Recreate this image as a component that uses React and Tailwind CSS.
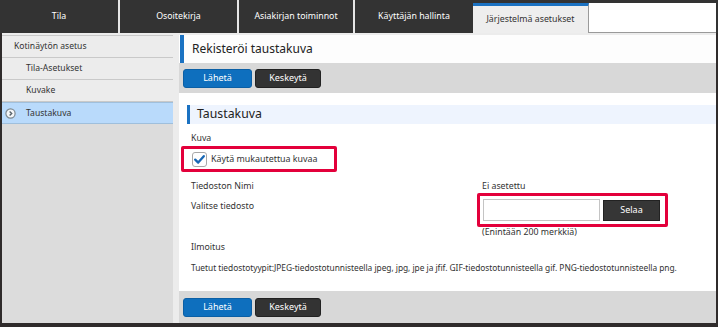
import React from 'react';

const Tab = ({ label, w }) => (
  <div className={`${w} h-full flex items-center justify-center text-white text-[8.8px]`}>{label}</div>
);

const Sep = () => <div className="w-[2px] h-full bg-[#e6e6e6]" />;

const SideItem = ({ label, indent, active }) => (
  <div
    className={`relative h-[22px] flex items-center border-b ${
      active ? 'bg-[#b9dafb] border-[#9fbfdc] border-t' : 'bg-[#ececec] border-[#c9c9c9]'
    } ${indent ? 'pl-[24px]' : 'pl-[12px]'}`}
  >
    {active && (
      <svg className="absolute left-[3px] top-[5px]" width="11" height="11" viewBox="0 0 11 11">
        <circle cx="5.5" cy="5.5" r="4.6" fill="#f4f6f8" stroke="#7d8890" strokeWidth="1.2" />
        <path d="M4.6 3.4 L6.7 5.5 L4.6 7.6" fill="none" stroke="#59636b" strokeWidth="1.4" />
      </svg>
    )}
    <span className="text-[8.6px] text-[#333]">{label}</span>
  </div>
);

const ActionBar = ({ h }) => (
  <div className={`${h} bg-[#d8d8d8] flex items-center pl-[4px] gap-[3px]`}>
    <button className="w-[69px] h-[19px] rounded-[3px] bg-[#0e6fbe] text-white text-[9px] border border-[#0b5fa5]">Lähetä</button>
    <button className="w-[66px] h-[19px] rounded-[3px] bg-[#333333] text-white text-[9px] border border-[#222]">Keskeytä</button>
  </div>
);

export default function App() {
  return (
    <div className="w-[718px] h-[327px] flex flex-col bg-[#2f2b2b] font-['Noto_Sans','Open_Sans',sans-serif] text-[#333] overflow-hidden">
      {/* tabs */}
      <div className="h-[33px] flex bg-[#333333] shrink-0">
        <Tab label="Tila" w="w-[118px]" />
        <Sep />
        <Tab label="Osoitekirja" w="w-[117px]" />
        <Sep />
        <Tab label="Asiakirjan toiminnot" w="w-[114px]" />
        <Sep />
        <Tab label="Käyttäjän hallinta" w="w-[118px]" />
        <div className="w-[116px] mt-[3px] bg-[#eeeeee] border-t-[3px] border-[#1b72c2] flex items-center justify-center text-[8.8px] text-[#333] border-r border-r-[#9a9a9a]">
          Järjestelmä asetukset
        </div>
        <div className="flex-1 mt-[3px] mr-[2px] bg-white border-b border-[#9a9a9a]" />
      </div>

      {/* body */}
      <div className="flex-1 flex bg-[#ececec] border-l-2 border-r-2 border-b-4 border-[#2f2b2b] pt-[2px] min-h-0">
        <div className="w-[171px] shrink-0 bg-[#dcdcdc] border-t border-[#c9c9c9]">
          <SideItem label="Kotinäytön asetus" />
          <SideItem label="Tila-Asetukset" indent />
          <SideItem label="Kuvake" indent />
          <SideItem label="Taustakuva" indent active />
        </div>

        <div className="flex-1 ml-[6px] bg-white flex flex-col min-w-0 overflow-hidden">
          <div className="h-[28px] ml-[1px] border-l-[4px] border-[#1b72c2] bg-[#fdfdfd] flex items-center pl-[8px] text-[12px] text-[#222]">
            Rekisteröi taustakuva
          </div>
          <ActionBar h="h-[30px]" />

          <div className="mt-[12px] ml-[8px] h-[19px] border-l-[3px] border-[#1b72c2] bg-[#eef4fe] flex items-center pl-[7px] text-[12.3px] text-[#222]">
            Taustakuva
          </div>

          <div className="pl-[12px] text-[8.8px] leading-[12px]">
            <div className="mt-[8px] h-[12px]">Kuva</div>
          </div>

          <div className="mt-[2px] ml-[2px] w-[156px] h-[26px] border-[3px] border-[#e3003b] rounded-[2px] flex items-center pl-[8px]">
            <svg width="15" height="15" viewBox="0 0 15 15">
              <rect x="0.5" y="0.5" width="14" height="14" rx="2.5" fill="#fff" stroke="#a8a8a8" />
              <path d="M3.2 7.6 L6.2 10.6 L11.8 4.2" fill="none" stroke="#1767b5" strokeWidth="2.3" strokeLinecap="round" strokeLinejoin="round" />
            </svg>
            <span className="ml-[4px] text-[8.9px]">Käytä mukautettua kuvaa</span>
          </div>

          <div className="pl-[12px] text-[8.8px] leading-[12px]">
            <div className="mt-[8px] flex h-[12px]">
              <div className="w-[291px]">Tiedoston Nimi</div>
              <div>Ei asetettu</div>
            </div>
          </div>

          <div className="mt-[1px] flex text-[8.8px] leading-[12px]">
            <div className="w-[298px] pl-[12px] pt-[7px]">Valitse tiedosto</div>
            <div className="w-[191px] h-[34px] border-[3px] border-[#e3003b] rounded-[2px] flex items-center pl-[3px] pr-[5px] gap-[3px]">
              <div className="w-[117px] h-[22px] bg-white border border-[#c4c4c4]" />
              <button className="w-[57px] h-[21px] bg-[#363636] border border-[#222] text-white text-[9px]">Selaa</button>
            </div>
          </div>

          <div className="pl-[303px] text-[8.8px] leading-[11px] h-[11px]">(Enintään 200 merkkiä)</div>

          <div className="pl-[12px] text-[8.8px] leading-[12px]">
            <div className="mt-[3px]">Ilmoitus</div>
            <div className="mt-[9px] whitespace-nowrap text-[8.4px] tracking-[-0.04px]">
              Tuetut tiedostotyypit:JPEG-tiedostotunnisteella jpeg, jpg, jpe ja jfif. GIF-tiedostotunnisteella gif. PNG-tiedostotunnisteella png.
            </div>
          </div>

          <div className="mt-auto">
            <ActionBar h="h-[32px]" />
          </div>
        </div>
      </div>
    </div>
  );
}
